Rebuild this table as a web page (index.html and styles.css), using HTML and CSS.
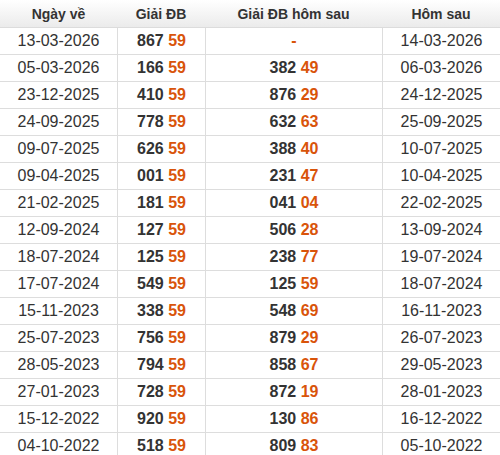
FILE: index.html
```html
<!DOCTYPE html>
<html lang="vi">
<head>
<meta charset="utf-8">
<link rel="stylesheet" href="styles.css">
</head>
<body>
<table class="kq">
<colgroup><col class="c1"><col class="c2"><col class="c3"><col class="c4"></colgroup>
<thead>
<tr><th>Ngày về</th><th>Giải ĐB</th><th>Giải ĐB hôm sau</th><th>Hôm sau</th></tr>
</thead>
<tbody>
<tr><td>13-03-2026</td><td class="n">867 <span class="h">59</span></td><td class="n"><span class="h">-</span></td><td>14-03-2026</td></tr>
<tr><td>05-03-2026</td><td class="n">166 <span class="h">59</span></td><td class="n">382 <span class="h">49</span></td><td>06-03-2026</td></tr>
<tr><td>23-12-2025</td><td class="n">410 <span class="h">59</span></td><td class="n">876 <span class="h">29</span></td><td>24-12-2025</td></tr>
<tr><td>24-09-2025</td><td class="n">778 <span class="h">59</span></td><td class="n">632 <span class="h">63</span></td><td>25-09-2025</td></tr>
<tr><td>09-07-2025</td><td class="n">626 <span class="h">59</span></td><td class="n">388 <span class="h">40</span></td><td>10-07-2025</td></tr>
<tr><td>09-04-2025</td><td class="n">001 <span class="h">59</span></td><td class="n">231 <span class="h">47</span></td><td>10-04-2025</td></tr>
<tr><td>21-02-2025</td><td class="n">181 <span class="h">59</span></td><td class="n">041 <span class="h">04</span></td><td>22-02-2025</td></tr>
<tr><td>12-09-2024</td><td class="n">127 <span class="h">59</span></td><td class="n">506 <span class="h">28</span></td><td>13-09-2024</td></tr>
<tr><td>18-07-2024</td><td class="n">125 <span class="h">59</span></td><td class="n">238 <span class="h">77</span></td><td>19-07-2024</td></tr>
<tr><td>17-07-2024</td><td class="n">549 <span class="h">59</span></td><td class="n">125 <span class="h">59</span></td><td>18-07-2024</td></tr>
<tr><td>15-11-2023</td><td class="n">338 <span class="h">59</span></td><td class="n">548 <span class="h">69</span></td><td>16-11-2023</td></tr>
<tr><td>25-07-2023</td><td class="n">756 <span class="h">59</span></td><td class="n">879 <span class="h">29</span></td><td>26-07-2023</td></tr>
<tr><td>28-05-2023</td><td class="n">794 <span class="h">59</span></td><td class="n">858 <span class="h">67</span></td><td>29-05-2023</td></tr>
<tr><td>27-01-2023</td><td class="n">728 <span class="h">59</span></td><td class="n">872 <span class="h">19</span></td><td>28-01-2023</td></tr>
<tr><td>15-12-2022</td><td class="n">920 <span class="h">59</span></td><td class="n">130 <span class="h">86</span></td><td>16-12-2022</td></tr>
<tr><td>04-10-2022</td><td class="n">518 <span class="h">59</span></td><td class="n">809 <span class="h">83</span></td><td>05-10-2022</td></tr>
</tbody>
</table>
</body>
</html>
```
FILE: styles.css
```css
html, body {
  margin: 0;
  padding: 0;
  background: #fff;
}
body {
  font-family: "Liberation Sans", Arial, sans-serif;
  color: #333;
}
.kq {
  width: 500px;
  border-collapse: separate;
  border-spacing: 0;
  table-layout: fixed;
}
.c1 { width: 117px; }
.c2 { width: 88px; }
.c3 { width: 177px; }
.c4 { width: 118px; }
.kq th {
  height: 27px;
  padding: 0;
  font-size: 14px;
  font-weight: bold;
  color: #333;
  text-align: center;
  background: linear-gradient(to bottom, #ffffff, #ebebeb);
  border-bottom: 1px solid #dcdcdc;
}
.kq td {
  height: 26px;
  padding: 0;
  font-size: 16px;
  text-align: center;
  color: #333;
  border-bottom: 1px solid #dddddd;
}
.kq td + td {
  border-left: 1px solid #dddddd;
}
.kq td.n {
  font-weight: bold;
}
.h {
  color: #d9540a;
}
```
